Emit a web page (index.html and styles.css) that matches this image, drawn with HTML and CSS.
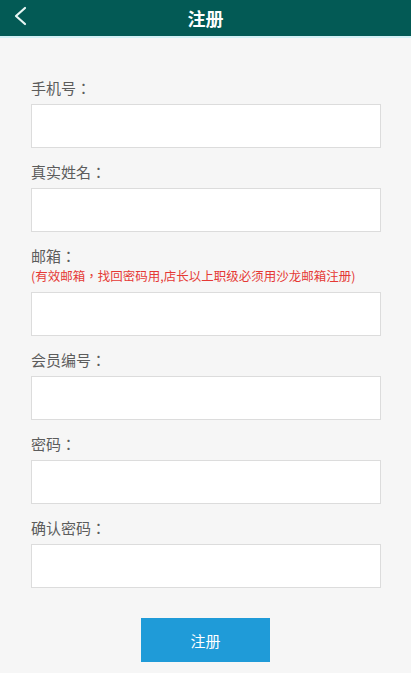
FILE: index.html
```html
<!DOCTYPE html>
<html lang="zh-CN">
<head>
    <meta charset="UTF-8">
    <meta name="viewport" content="width=device-width, initial-scale=1.0">
    <title>注册</title>
    <link rel="stylesheet" href="styles.css">
</head>
<body>
    <header class="topbar">
        <a class="back" href="#">
            <svg width="14" height="20" viewBox="0 0 14 20">
                <path d="M12 2 L3 10 L12 18" fill="none" stroke="#e8f6f4" stroke-width="2.2" stroke-linecap="round" stroke-linejoin="round"/>
            </svg>
        </a>
        <h1>注册</h1>
    </header>

    <!-- zh-TW so the colon / comma sit centred like the original -->
    <form class="reg-form" lang="zh-TW">
        <div class="field">
            <label>手机号：</label>
            <input type="text">
        </div>
        <div class="field">
            <label>真实姓名：</label>
            <input type="text">
        </div>
        <div class="field">
            <label>邮箱：</label>
            <p class="note">(有效邮箱，找回密码用,店长以上职级必须用沙龙邮箱注册)</p>
            <input type="text">
        </div>
        <div class="field">
            <label>会员编号：</label>
            <input type="text">
        </div>
        <div class="field">
            <label>密码：</label>
            <input type="password">
        </div>
        <div class="field">
            <label>确认密码：</label>
            <input type="password">
        </div>
        <div class="submit-row">
            <button type="submit" lang="zh-CN">注册</button>
        </div>
    </form>
</body>
</html>
```

FILE: styles.css
```css
body {
    margin: 0;
    background-color: #f6f6f6;
    font-family: "Noto Sans CJK SC", "Noto Sans", sans-serif;
}

.topbar {
    position: relative;
    height: 36px;
    background-color: #035a55;
    border-bottom: 2px solid #d3f1f6;
    display: flex;
    align-items: center;
    justify-content: center;
}

.topbar h1 {
    margin: 0;
    font-size: 18px;
    font-weight: bold;
    color: #fff;
    line-height: 30px;
}

.back {
    position: absolute;
    left: 13px;
    top: 6px;
    display: block;
}

.back svg {
    display: block;
}

.reg-form {
    padding: 40px 30px 0 31px;
}

.field {
    display: flex;
    flex-direction: column;
    margin-bottom: 14px;
}

.field label {
    font-family: "Noto Sans CJK TC", "Noto Sans CJK SC", sans-serif;
    font-size: 15px;
    line-height: 20px;
    color: #5c5c5c;
    margin-bottom: 6px;
}

.field .note {
    margin: -6px 0 6px;
    font-family: "Noto Sans CJK TC", "Noto Sans CJK SC", sans-serif;
    font-size: 12.5px;
    line-height: 20px;
    color: #e53935;
    white-space: nowrap;
}

.field input {
    box-sizing: border-box;
    width: 350px;
    height: 44px;
    margin: 0;
    padding: 0 8px;
    border: 1px solid #dcdcdc;
    background: #fff;
    font-size: 15px;
    outline: none;
}

.submit-row {
    display: flex;
    justify-content: center;
    padding-top: 16px;
    margin-left: -1px;
}

.submit-row button {
    width: 129px;
    height: 44px;
    border: none;
    background-color: #1f9bd8;
    color: #fff;
    font-family: "Noto Sans CJK SC", sans-serif;
    font-size: 15px;
    cursor: pointer;
}
```
